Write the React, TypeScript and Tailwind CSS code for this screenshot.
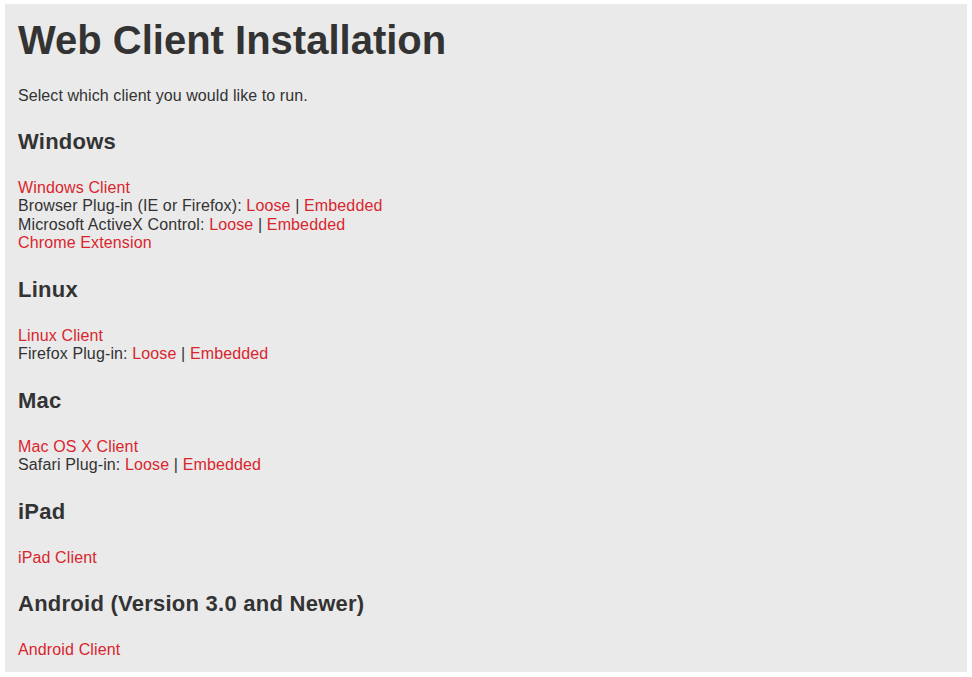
import React from 'react';

type Part = { text: string; link?: boolean };

const sections: { title: string; lines: Part[][] }[] = [
  {
    title: 'Windows',
    lines: [
      [{ text: 'Windows Client', link: true }],
      [{ text: 'Browser Plug-in (IE or Firefox): ' }, { text: 'Loose', link: true }, { text: ' | ' }, { text: 'Embedded', link: true }],
      [{ text: 'Microsoft ActiveX Control: ' }, { text: 'Loose', link: true }, { text: ' | ' }, { text: 'Embedded', link: true }],
      [{ text: 'Chrome Extension', link: true }],
    ],
  },
  {
    title: 'Linux',
    lines: [
      [{ text: 'Linux Client', link: true }],
      [{ text: 'Firefox Plug-in: ' }, { text: 'Loose', link: true }, { text: ' | ' }, { text: 'Embedded', link: true }],
    ],
  },
  {
    title: 'Mac',
    lines: [
      [{ text: 'Mac OS X Client', link: true }],
      [{ text: 'Safari Plug-in: ' }, { text: 'Loose', link: true }, { text: ' | ' }, { text: 'Embedded', link: true }],
    ],
  },
  {
    title: 'iPad',
    lines: [[{ text: 'iPad Client', link: true }]],
  },
  {
    title: 'Android (Version 3.0 and Newer)',
    lines: [[{ text: 'Android Client', link: true }]],
  },
];

const App: React.FC = () => {
  return (
    <div className="min-h-[677px] bg-white pt-[4px] pl-[5px] text-[#333333]" style={{ fontFamily: '"Liberation Sans", Arial, sans-serif' }}>
      <div className="w-[962px] bg-[#eaeaea] px-[13px] pt-[13px] pb-[12px]">
        <h1 className="text-[40px] font-bold leading-[46px]">Web Client Installation</h1>
        <p className="mt-[24px] text-[16px] leading-[18.5px] tracking-[0.08px]">Select which client you would like to run.</p>

        {sections.map((s, i) => (
          <div key={s.title} className={i === 0 ? 'mt-[23px]' : 'mt-[24px]'}>
            <h2 className="text-[22px] font-bold leading-[26px] tracking-[0.25px]">{s.title}</h2>
            <div className="mt-[24px] text-[16px] leading-[18.5px] tracking-[0.13px]">
              {s.lines.map((line, j) => (
                <div key={j}>
                  {line.map((p, k) =>
                    p.link ? (
                      <a key={k} href="#" className="text-[#d9262e]">
                        {p.text}
                      </a>
                    ) : (
                      <span key={k} className="whitespace-pre">{p.text}</span>
                    )
                  )}
                </div>
              ))}
            </div>
          </div>
        ))}
      </div>
    </div>
  );
};

export default App;
